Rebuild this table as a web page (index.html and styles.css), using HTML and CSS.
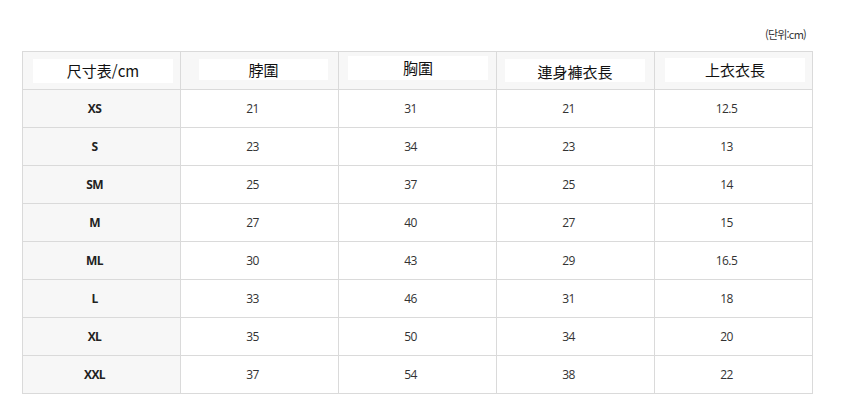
FILE: index.html
```html
<!DOCTYPE html>
<html lang="ko">
<head>
<meta charset="utf-8">
<link rel="stylesheet" href="styles.css">
</head>
<body>
<div class="wrap">
  <div class="unit">(단위:cm)</div>
  <table class="size">
    <thead>
      <tr>
        <th><span class="lbl l1">尺寸表/cm</span></th>
        <th><span class="lbl l2">脖圍</span></th>
        <th><span class="lbl l3">胸圍</span></th>
        <th><span class="lbl l4">連身褲衣長</span></th>
        <th><span class="lbl l5">上衣衣長</span></th>
      </tr>
    </thead>
    <tbody>
      <tr><td class="sz">XS</td><td>21</td><td>31</td><td>21</td><td>12.5</td></tr>
      <tr><td class="sz">S</td><td>23</td><td>34</td><td>23</td><td>13</td></tr>
      <tr><td class="sz">SM</td><td>25</td><td>37</td><td>25</td><td>14</td></tr>
      <tr><td class="sz">M</td><td>27</td><td>40</td><td>27</td><td>15</td></tr>
      <tr><td class="sz">ML</td><td>30</td><td>43</td><td>29</td><td>16.5</td></tr>
      <tr><td class="sz">L</td><td>33</td><td>46</td><td>31</td><td>18</td></tr>
      <tr><td class="sz">XL</td><td>35</td><td>50</td><td>34</td><td>20</td></tr>
      <tr><td class="sz">XXL</td><td>37</td><td>54</td><td>38</td><td>22</td></tr>
    </tbody>
  </table>
</div>
</body>
</html>
```

FILE: styles.css
```css
html, body {
  margin: 0;
  padding: 0;
  background: #fff;
}
body {
  font-family: "Noto Sans CJK KR", "Noto Sans", sans-serif;
  color: #333;
}
.wrap {
  padding: 26px 0 0 22px;
  width: 792px;
}
.unit {
  text-align: right;
  font-size: 11px;
  letter-spacing: -0.8px;
  line-height: 16px;
  height: 16px;
  padding-right: 8px;
  margin-bottom: 9px;
  color: #333;
}
.size {
  border-collapse: collapse;
  width: 791px;
  table-layout: fixed;
}
.size th, .size td {
  border: 1px solid #dadada;
  text-align: center;
  vertical-align: middle;
  padding: 0;
  height: 37px;
}
.size th {
  background: #f7f7f7;
  font-weight: normal;
  font-size: 15px;
  color: #111;
}
.lbl {
  display: block;
  background: #fff;
  height: 24px;
  line-height: 24px;
  margin: 0 auto;
}
.l1 { width: 140px; margin-left: 10px; }
.l2 { width: 129px; margin-left: 18px; height: 21px; line-height: 21px; margin-top: -3px; }
.l3 { width: 140px; margin-left: 9px; margin-top: -5px; }
.l4 { width: 140px; margin-left: 8px; height: 23px; line-height: 25px; }
.l5 { width: 140px; margin-left: 10px; margin-top: -1px; }
.size td {
  font-size: 12px;
  font-family: "Open Sans", "Noto Sans CJK KR", sans-serif;
  letter-spacing: -0.6px;
  color: #333;
  padding-right: 14px;
}
.size td.sz {
  background: #f7f7f7;
  font-weight: bold;
  color: #222;
}
```
